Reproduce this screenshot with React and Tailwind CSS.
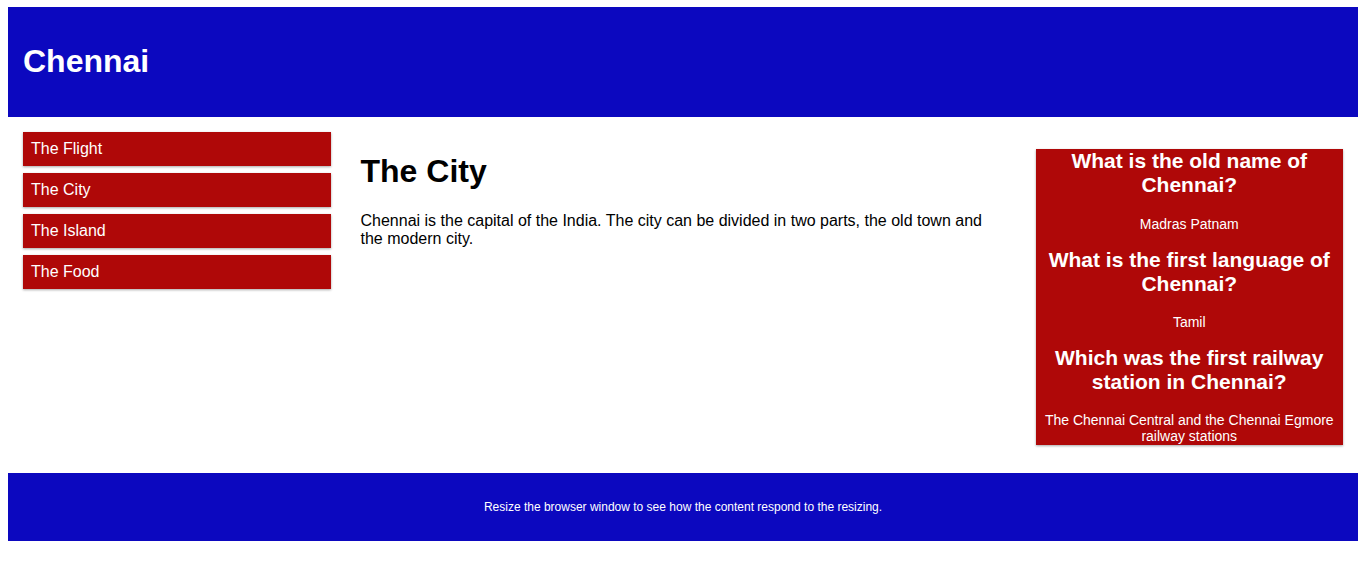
const MENU = ['The Flight', 'The City', 'The Island', 'The Food'];

const FAQ = [
  { q: 'What is the old name of Chennai?', a: 'Madras Patnam' },
  { q: 'What is the first language of Chennai?', a: 'Tamil' },
  { q: 'Which was the first railway station in Chennai?', a: 'The Chennai Central and the Chennai Egmore railway stations' },
];

const shadow = 'shadow-[0_1px_3px_rgba(0,0,0,0.12),0_1px_2px_rgba(0,0,0,0.24)]';

export default function App() {
  return (
    <div className="min-h-screen bg-white px-2 pt-[7px] pb-2 font-['Liberation_Sans',Arial,sans-serif] text-black leading-[normal]">
      {/* header */}
      <div className="bg-[#0c08bf] p-[15px] text-white">
        <h1 className="my-[21.44px] text-[32px] font-bold leading-[normal]">Chennai</h1>
      </div>

      <div className="flex">
        {/* menu */}
        <div className="w-1/4 p-[15px]">
          <ul className="flex flex-col gap-[7px]">
            {MENU.map((item) => (
              <li key={item} className={`bg-[#af0808] p-2 text-base leading-[normal] text-white ${shadow}`}>
                {item}
              </li>
            ))}
          </ul>
        </div>

        {/* main */}
        <div className="w-1/2 p-[15px]">
          <h1 className="my-[21.44px] text-[32px] font-bold leading-[normal]">The City</h1>
          <p className="text-base leading-[normal]">
            Chennai is the capital of the India. The city can be divided in two parts, the old town and the modern city.
          </p>
        </div>

        {/* aside */}
        <div className="w-1/4 px-[15px] pt-[15px] pb-[28px]">
          <div className={`mt-[17.4px] flex flex-col gap-[15.4px] bg-[#af0808] text-center text-[14px] text-white ${shadow}`}>
            {FAQ.map((f) => (
              <div key={f.q} className="flex flex-col gap-[17.4px]">
                <h2 className="text-[21px] font-bold leading-[normal]">{f.q}</h2>
                <p className="pt-[2px] text-[14px] leading-[15.6px]">{f.a}</p>
              </div>
            ))}
          </div>
        </div>
      </div>

      {/* footer */}
      <div className="bg-[#0c08bf] p-[15px] text-center text-white">
        <p className="my-3 text-[12px] leading-[normal]">
          Resize the browser window to see how the content respond to the resizing.
        </p>
      </div>
    </div>
  );
}
